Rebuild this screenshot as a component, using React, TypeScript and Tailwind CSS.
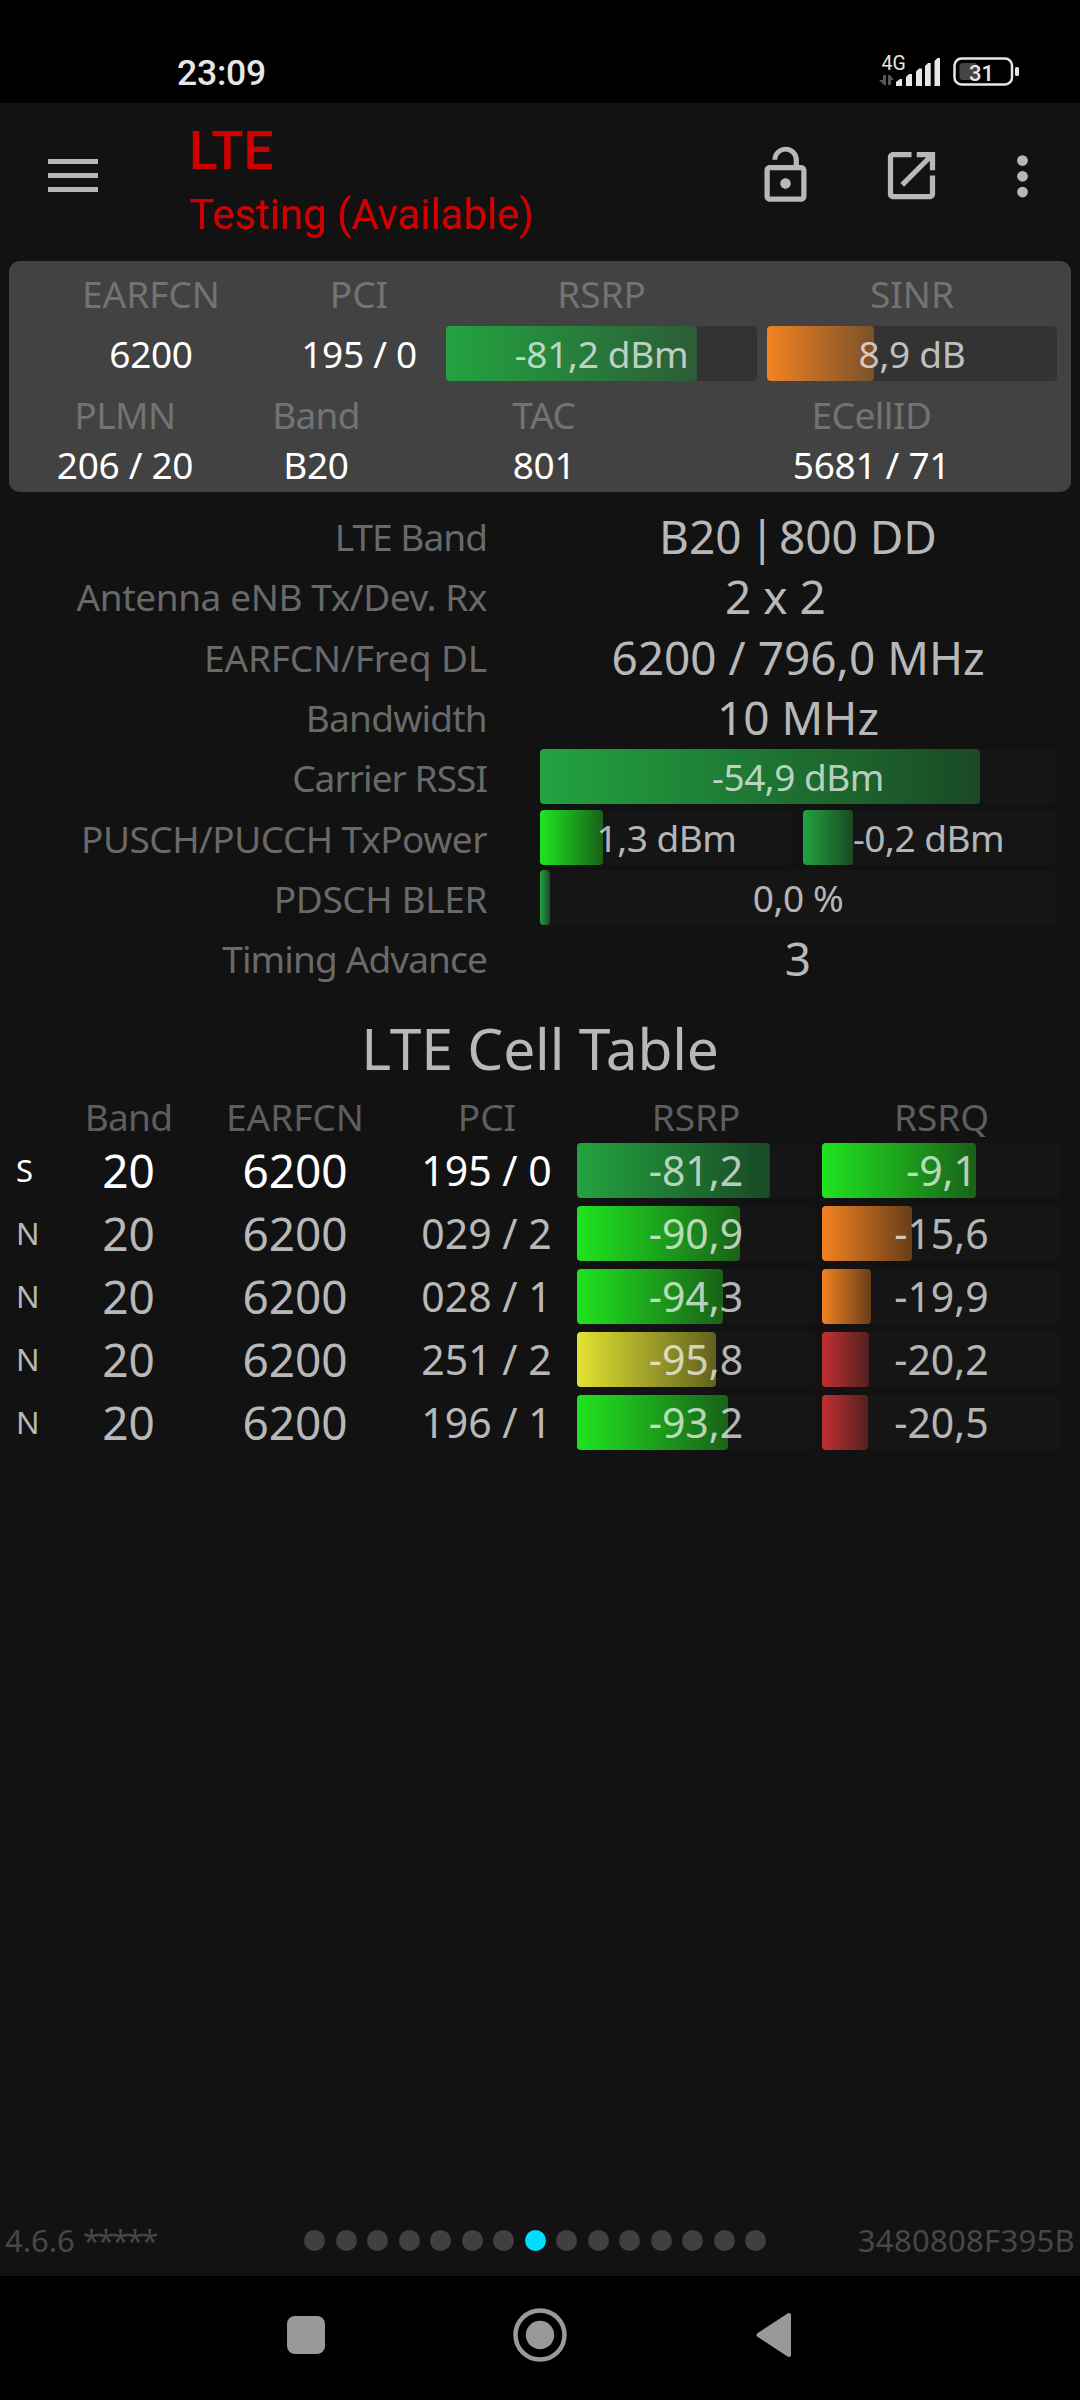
import React, { FC, ReactNode } from 'react'

type Tone = 'green' | 'lime' | 'orange' | 'yellow' | 'red'

const TONES: Record<Tone, string> = {
  green: 'bg-linear-to-r from-[#22a340] to-[#22a340]/37',
  lime: 'bg-linear-to-r from-[#20e41f] to-[#20e41f]/37',
  orange: 'bg-linear-to-r from-[#f38220] to-[#f38220]/37',
  yellow: 'bg-linear-to-r from-[#e2e232] to-[#e2e232]/37',
  red: 'bg-linear-to-r from-[#c23131] to-[#c23131]/37',
}

interface IMeter {
  tone: Tone
  // filled length in pixels
  fill: number
  track?: string
  className?: string
  children: ReactNode
}

const Meter: FC<IMeter> = ({ tone, fill, track = 'bg-[#151515]', className = '', children }) => (
  <div className={`relative flex h-[55px] items-center justify-center rounded-[4px] ${track} ${className}`}>
    <div className={`absolute inset-y-0 left-0 rounded-[4px] ${TONES[tone]}`} style={{ width: fill }} />
    <span className="relative whitespace-pre text-white/70">{children}</span>
  </div>
)

const StatusBar: FC = () => (
  <div className="flex h-[103px] shrink-0 items-start justify-between bg-black pl-[177px] pr-[58px] pt-[50px] font-['Roboto',sans-serif]">
    <span className="text-[35.5px] font-medium leading-[46px] tracking-[-0.2px] text-[#e6e6e6]">23:09</span>
    <svg width="146" height="40" viewBox="876 50 146 40" fill="#e6e6e6">
      <text x="881.5" y="69.5" fontSize="19.5">
        4G
      </text>
      <path d="M883 75h3v10h-2l-5-5h4zM888 75h2l4 5h-3v5h-3z" fill="#555" />
      <path d="M896 86v-4l4-3h2v7zM906 86V77l3-3h3v12zM916 86V71.500l3-3h3v17.500zM925 86V66l3-3h2.700v23zM934.500 86V61l3-3h2.500v28z" />
      <rect x="954.500" y="58.500" width="57.500" height="26" rx="7" fill="none" stroke="#e6e6e6" strokeWidth="2.500" />
      <rect x="959.500" y="63" width="18" height="17" rx="3" fill="#444" />
      <rect x="1015" y="67" width="4" height="9" rx="1.500" />
      <text x="981.500" y="81" fontSize="22" textAnchor="middle" fontWeight="500">
        31
      </text>
    </svg>
  </div>
)

const Header: FC = () => (
  <header className="flex h-[158px] shrink-0 items-start text-[#b8b8b8]">
    <div className="ml-[48px] mt-[56px] flex w-[50px] flex-col gap-[9px]">
      <div className="h-[5px] bg-[#b8b8b8]" />
      <div className="h-[5px] bg-[#b8b8b8]" />
      <div className="h-[5px] bg-[#b8b8b8]" />
    </div>
    <div className="ml-[91px] w-[400px] pt-[17px] font-['Roboto',sans-serif] text-[#d00000]">
      <div className="text-[53px] font-medium leading-[62px]">LTE</div>
      <div className="mt-[8px] whitespace-nowrap text-[42px] leading-[50px] tracking-[-0.06px]">Testing (Available)</div>
    </div>
    <div className="ml-[165px] mt-[41px] flex items-start">
      <svg width="63" height="63" viewBox="0 0 24 24" fill="currentColor">
        <path d="M12 17c1.100 0 2-.9 2-2s-.9-2-2-2-2 .9-2 2 .9 2 2 2zm6-9h-.9V6c0-2.760-2.240-5-5-5S7 3.240 7 6h1.900c0-1.710 1.390-3.100 3.100-3.100s3.100 1.390 3.100 3.100v2H6c-1.100 0-2 .9-2 2v10c0 1.100.9 2 2 2h12c1.100 0 2-.9 2-2V10c0-1.100-.9-2-2-2zm0 12H6V10h12v10z" />
      </svg>
      <svg className="ml-[63px]" width="63" height="63" viewBox="0 0 24 24" fill="currentColor">
        <path d="M19 19H5V5h7V3H5c-1.110 0-2 .9-2 2v14c0 1.100.89 2 2 2h14c1.100 0 2-.9 2-2v-7h-2v7zM14 3v2h3.590l-9.830 9.830 1.410 1.410L19 6.410V10h2V3h-7z" />
      </svg>
      <svg className="ml-[48px]" width="63" height="63" viewBox="0 0 24 24" fill="currentColor">
        <circle cx="12" cy="6.300" r="2.050" />
        <circle cx="12" cy="12.300" r="2.050" />
        <circle cx="12" cy="18.300" r="2.050" />
      </svg>
    </div>
  </header>
)

const ServingCell: FC = () => (
  <section className="mx-[9px] h-[231px] shrink-0 rounded-[11px] bg-[#424242] text-center text-[37px] tracking-[-0.3px] text-white">
    <div className="grid grid-cols-[284px_132px_311px_290px] pt-[9px] leading-[48px] tracking-normal text-[#737373]">
      <span>EARFCN</span>
      <span>PCI</span>
      <span className="-mr-[21px] pl-[21px]">RSRP</span>
      <span className="-mr-[31px] pl-[31px]">SINR</span>
    </div>
    <div className="mt-[8px] flex items-center">
      <span className="w-[284px]">6200</span>
      <span className="w-[132px] whitespace-nowrap">195 / 0</span>
      <Meter tone="green" fill={251} track="bg-[#333]" className="ml-[21px] w-[311px]">
        -81,2 dBm
      </Meter>
      <Meter tone="orange" fill={107} track="bg-[#333]" className="ml-[10px] w-[290px]">
        8,9 dB
      </Meter>
    </div>
    <div className="grid grid-cols-[232px_150px_306px_349px] pt-[8px] leading-[50px]">
      <span className="tracking-[-0.5px] text-[#737373]">PLMN</span>
      <span className="tracking-[-0.7px] text-[#737373]">Band</span>
      <span className="text-[#737373]">TAC</span>
      <span className="tracking-[-0.5px] text-[#737373]">ECellID</span>
      <span>206 / 20</span>
      <span>B20</span>
      <span>801</span>
      <span>5681 / 71</span>
    </div>
  </section>
)

interface IInfoRow {
  label: string
  tracking: string
  children: ReactNode
}

const InfoRow: FC<IInfoRow> = ({ label, tracking, children }) => (
  <div className="flex h-[60.3px] items-center">
    <div className={`w-[487px] whitespace-nowrap text-right text-[37px] text-[#696969] ${tracking}`}>{label}</div>
    <div className="ml-[53px] w-[516px] text-center text-[46px] text-[#b8b8b8]">{children}</div>
  </div>
)

const CarrierInfo: FC = () => (
  <section className="h-[483px] shrink-0 pt-[14.4px] leading-[55px]">
    <InfoRow label="LTE Band" tracking="tracking-[-0.95px]">
      B20<span className="whitespace-pre tracking-[-4px]"> | </span>800 DD
    </InfoRow>
    <InfoRow label="Antenna eNB Tx/Dev. Rx" tracking="tracking-[-0.4px]">
      <span className="mr-[45px]">2 x 2</span>
    </InfoRow>
    <InfoRow label="EARFCN/Freq DL" tracking="tracking-[-0.15px]">
      6200 / 796,0 MHz
    </InfoRow>
    <InfoRow label="Bandwidth" tracking="tracking-[-0.75px]">
      10 MHz
    </InfoRow>
    <InfoRow label="Carrier RSSI" tracking="tracking-[-0.95px]">
      <Meter tone="green" fill={440} className="mb-[2px] text-[37px] tracking-[-0.5px]">
        -54,9 dBm
      </Meter>
    </InfoRow>
    <InfoRow label="PUSCH/PUCCH TxPower" tracking="tracking-[-0.5px]">
      <div className="mb-[2px] flex gap-[12px] text-[37px] tracking-[-0.5px]">
        <Meter tone="lime" fill={63} className="w-[251px] pl-[2px]">
          1,3 dBm
        </Meter>
        <Meter tone="green" fill={50} className="w-[253px] pr-[2px]">
          -0,2 dBm
        </Meter>
      </div>
    </InfoRow>
    <InfoRow label="PDSCH BLER" tracking="tracking-[-0.4px]">
      <Meter tone="green" fill={10} className="mb-[2px] text-[37px] tracking-[-0.4px]">
        0,0 %
      </Meter>
    </InfoRow>
    <InfoRow label="Timing Advance" tracking="tracking-[-0.87px]">
      3
    </InfoRow>
  </section>
)

interface ICell {
  type: string
  pci: string
  rsrp: string
  rsrpFill: number
  rsrpTone: Tone
  rsrq: string
  rsrqFill: number
  rsrqTone: Tone
}

const CELLS: ICell[] = [
  { type: 'S', pci: '195 / 0', rsrp: '-81,2', rsrpFill: 193, rsrpTone: 'green', rsrq: '-9,1', rsrqFill: 154, rsrqTone: 'lime' },
  { type: 'N', pci: '029 / 2', rsrp: '-90,9', rsrpFill: 163, rsrpTone: 'lime', rsrq: '-15,6', rsrqFill: 90, rsrqTone: 'orange' },
  { type: 'N', pci: '028 / 1', rsrp: '-94,3', rsrpFill: 146, rsrpTone: 'lime', rsrq: '-19,9', rsrqFill: 49, rsrqTone: 'orange' },
  { type: 'N', pci: '251 / 2', rsrp: '-95,8', rsrpFill: 139, rsrpTone: 'yellow', rsrq: '-20,2', rsrqFill: 47, rsrqTone: 'red' },
  { type: 'N', pci: '196 / 1', rsrp: '-93,2', rsrpFill: 151, rsrpTone: 'lime', rsrq: '-20,5', rsrqFill: 46, rsrqTone: 'red' },
]

const CellTable: FC = () => (
  <section className="flex-1 pt-[35px] text-center">
    <h2 className="text-[57px] leading-[76px] tracking-[-0.2px] text-[#b8b8b8]">LTE Cell Table</h2>
    <div className="grid grid-cols-[64px_129px_204px_180px_238px_239px] pt-[7px] text-[37px] leading-[48px] text-[#5e5e5e]">
      <span />
      <span className="tracking-[-0.7px]">Band</span>
      <span>EARFCN</span>
      <span>PCI</span>
      <span>RSRP</span>
      <span className="-mr-[7px] pl-[7px]">RSRQ</span>
    </div>
    <div className="mt-[2px] flex flex-col gap-[8px] leading-[55px]">
      {CELLS.map((cell) => (
        <div key={cell.pci} className={`flex items-center ${cell.type === 'S' ? 'text-white' : 'text-[#b8b8b8]'}`}>
          <span className="w-[64px] pl-[16px] text-left text-[31px]">{cell.type}</span>
          <span className="w-[129px] text-[46px]">20</span>
          <span className="w-[204px] text-[46px]">6200</span>
          <span className="w-[180px] whitespace-nowrap pr-[1px] text-[41px]">{cell.pci}</span>
          <Meter tone={cell.rsrpTone} fill={cell.rsrpFill} className="w-[238px] text-[41px]">
            {cell.rsrp}
          </Meter>
          <Meter tone={cell.rsrqTone} fill={cell.rsrqFill} className="ml-[7px] w-[239px] text-[41px]">
            {cell.rsrq}
          </Meter>
        </div>
      ))}
    </div>
  </section>
)

const Footer: FC = () => (
  <footer className="flex h-[72px] shrink-0 items-center text-[31px] text-[#474747]">
    <span className="w-[304px] pl-[5px]">
      4.6.6 <span className="tracking-[-2.5px]">*****</span>
    </span>
    <div className="flex w-[462px] justify-between">
      {Array.from({ length: 15 }, (_, i) => (
        <div key={i} className={`size-[21px] rounded-full ${i === 7 ? 'bg-[#00ddff]' : 'bg-[#404040]'}`} />
      ))}
    </div>
    <span className="flex-1 pr-[5px] text-right tracking-[0.3px]">3480808F395B</span>
  </footer>
)

const NavBar: FC = () => (
  <nav className="flex h-[124px] shrink-0 items-center bg-black pb-[6px] pl-[287px]">
    <div className="size-[38px] rounded-[8px] bg-[#999]" />
    <svg className="ml-[188px]" width="54" height="54" viewBox="0 0 54 54">
      <circle cx="27" cy="27" r="24.500" fill="none" stroke="#999" strokeWidth="4.500" />
      <circle cx="27" cy="27" r="14.200" fill="#999" />
    </svg>
    <svg className="ml-[189px]" width="36" height="46" viewBox="0 0 36 46">
      <path d="M2.500 23 33 3v40z" fill="#999" stroke="#999" strokeWidth="4" strokeLinejoin="round" />
    </svg>
  </nav>
)

const App: FC = () => {
  return (
    <div className="flex h-[2400px] w-[1080px] flex-col overflow-hidden bg-[#121212] font-['Noto_Sans',sans-serif]">
      <StatusBar />
      <Header />
      <ServingCell />
      <CarrierInfo />
      <CellTable />
      <Footer />
      <NavBar />
    </div>
  )
}

export default App
